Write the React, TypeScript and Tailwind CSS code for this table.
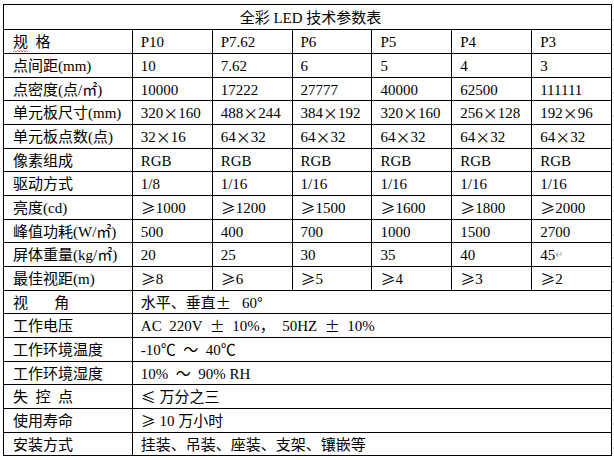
const cjk = "font-['Noto_Sans_CJK_SC',sans-serif]";

function T({ s }: { s: string }) {
  return (
    <>
      {s.split(/([×≥≤±°])/).map((p, i) =>
        /^[×≥≤±°]$/.test(p) ? (
          <span key={i} className={cjk}>
            {p}
          </span>
        ) : (
          p
        )
      )}
    </>
  );
}

const specRows: [string, string[]][] = [
  ["规  格", ["P10", "P7.62", "P6", "P5", "P4", "P3"]],
  ["点间距(mm)", ["10", "7.62", "6", "5", "4", "3"]],
  ["点密度(点/㎡)", ["10000", "17222", "27777", "40000", "62500", "111111"]],
  ["单元板尺寸(mm)", ["320×160", "488×244", "384×192", "320×160", "256×128", "192×96"]],
  ["单元板点数(点)", ["32×16", "64×32", "64×32", "64×32", "64×32", "64×32"]],
  ["像素组成", ["RGB", "RGB", "RGB", "RGB", "RGB", "RGB"]],
  ["驱动方式", ["1/8", "1/16", "1/16", "1/16", "1/16", "1/16"]],
  ["亮度(cd)", ["≥1000", "≥1200", "≥1500", "≥1600", "≥1800", "≥2000"]],
  ["峰值功耗(W/㎡)", ["500", "400", "700", "1000", "1500", "2700"]],
  ["屏体重量(kg/㎡)", ["20", "25", "30", "35", "40", "45"]],
  ["最佳视距(m)", ["≥8", "≥6", "≥5", "≥4", "≥3", "≥2"]],
];

const wideRows: [string, string][] = [
  ["视       角", "水平、垂直±   60°"],
  ["工作电压", "AC  220V  ±  10%，  50HZ  ±  10%"],
  ["工作环境温度", "-10℃  ～  40℃"],
  ["工作环境湿度", "10%  ～  90% RH"],
  ["失  控  点", "≤ 万分之三"],
  ["使用寿命", "≥ 10 万小时"],
  ["安装方式", "挂装、吊装、座装、支架、镶嵌等"],
];

function Marker() {
  return <span className="ml-px mt-[6px] h-[2px] w-[1px] bg-gray-300" />;
}

export default function App() {
  const heights = ["h-[24px]", "h-[24px]", "h-[23px]"];

  return (
    <div className="h-[460px] w-[614px] bg-white pl-[3px] pt-[4px] text-[15px] leading-[20px] text-black font-['Liberation_Serif','Noto_Sans_CJK_SC',serif] whitespace-pre">
      {/* Title */}
      <div className="flex items-center">
        <div className="flex h-[26px] w-[609px] items-center justify-center border border-black pl-[6px] pt-[1px]">
          全彩 LED 技术参数表
        </div>
        <Marker />
      </div>

      {/* Per-model specs */}
      {specRows.map(([label, values], i) => (
        <div key={label} className="flex items-center">
          <div className={`flex w-[609px] border-l border-black ${heights[i % 3]}`}>
            <div className="flex w-[129px] items-center border-r border-b border-black pl-[9px] pt-[1px]">
              {i === 0 ? (
                <>
                  <span className="relative">
                    规
                    <svg className="absolute left-0 top-[18px]" width="15" height="3" viewBox="0 0 15 3">
                      <path d="M0 2 L1.5 0.5 L3 2 L4.5 0.5 L6 2 L7.5 0.5 L9 2 L10.5 0.5 L12 2 L13.5 0.5 L15 2" fill="none" stroke="#e03030" strokeWidth="0.8" />
                    </svg>
                  </span>
                  {"  格"}
                </>
              ) : (
                <T s={label} />
              )}
            </div>
            {values.map((v, j) => (
              <div
                key={j}
                className="flex w-[80px] items-center border-r border-b border-black pl-[8px] pt-[1px]"
              >
                <T s={v} />
                {i === 9 && j === 5 && <span className="text-[10px] text-gray-400">↵</span>}
              </div>
            ))}
          </div>
          <Marker />
        </div>
      ))}

      {/* Shared specs */}
      {wideRows.map(([label, value], k) => {
        const i = k + specRows.length;
        return (
          <div key={label} className="flex items-center">
            <div className={`flex w-[609px] border-l border-black ${heights[i % 3]}`}>
              <div className="flex w-[129px] items-center border-r border-b border-black pl-[9px] pt-[1px]">
                {label}
              </div>
              <div className="flex w-[480px] items-center border-r border-b border-black pl-[8px] pt-[1px]">
                <T s={value} />
              </div>
            </div>
            <Marker />
          </div>
        );
      })}
    </div>
  );
}
